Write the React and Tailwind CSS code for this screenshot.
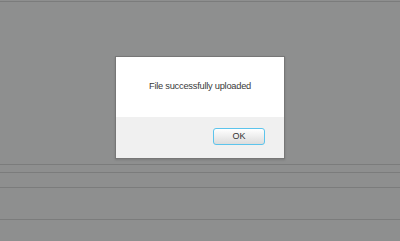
export default function App() {
  return (
    <div className="relative h-[241px] w-[400px] overflow-hidden bg-[#8e8f8f] font-['Liberation_Sans',Arial,sans-serif]">
      {/* background page rows */}
      <div className="mt-px h-[163px] border-t border-[#7b7c7c]" />
      <div className="h-[8px] border-t border-[#7b7c7c]" />
      <div className="h-[15px] border-t border-[#7b7c7c]" />
      <div className="h-[32px] border-t border-[#7b7c7c]" />
      <div className="border-t border-[#7b7c7c]" />

      {/* modal */}
      <div className="absolute left-[115px] top-[56px] flex w-[170px] flex-col border border-[#777] shadow-[0_1px_2px_rgba(0,0,0,0.15)]">
        <div className="flex h-[60px] items-center justify-center bg-white pb-px text-[9.3px] tracking-[-0.25px] text-[#3a3a3a]">
          File successfully uploaded
        </div>
        <div className="flex h-[41px] items-start justify-end bg-[#f0f0f0] pr-[19px] pt-[11px]">
          <button className="flex h-[17px] w-[52px] items-center justify-center rounded-[3px] border border-[#5cc4ec] bg-gradient-to-b from-white to-[#dcdcdc] text-[9px] text-[#333]">
            OK
          </button>
        </div>
      </div>
    </div>
  );
}
